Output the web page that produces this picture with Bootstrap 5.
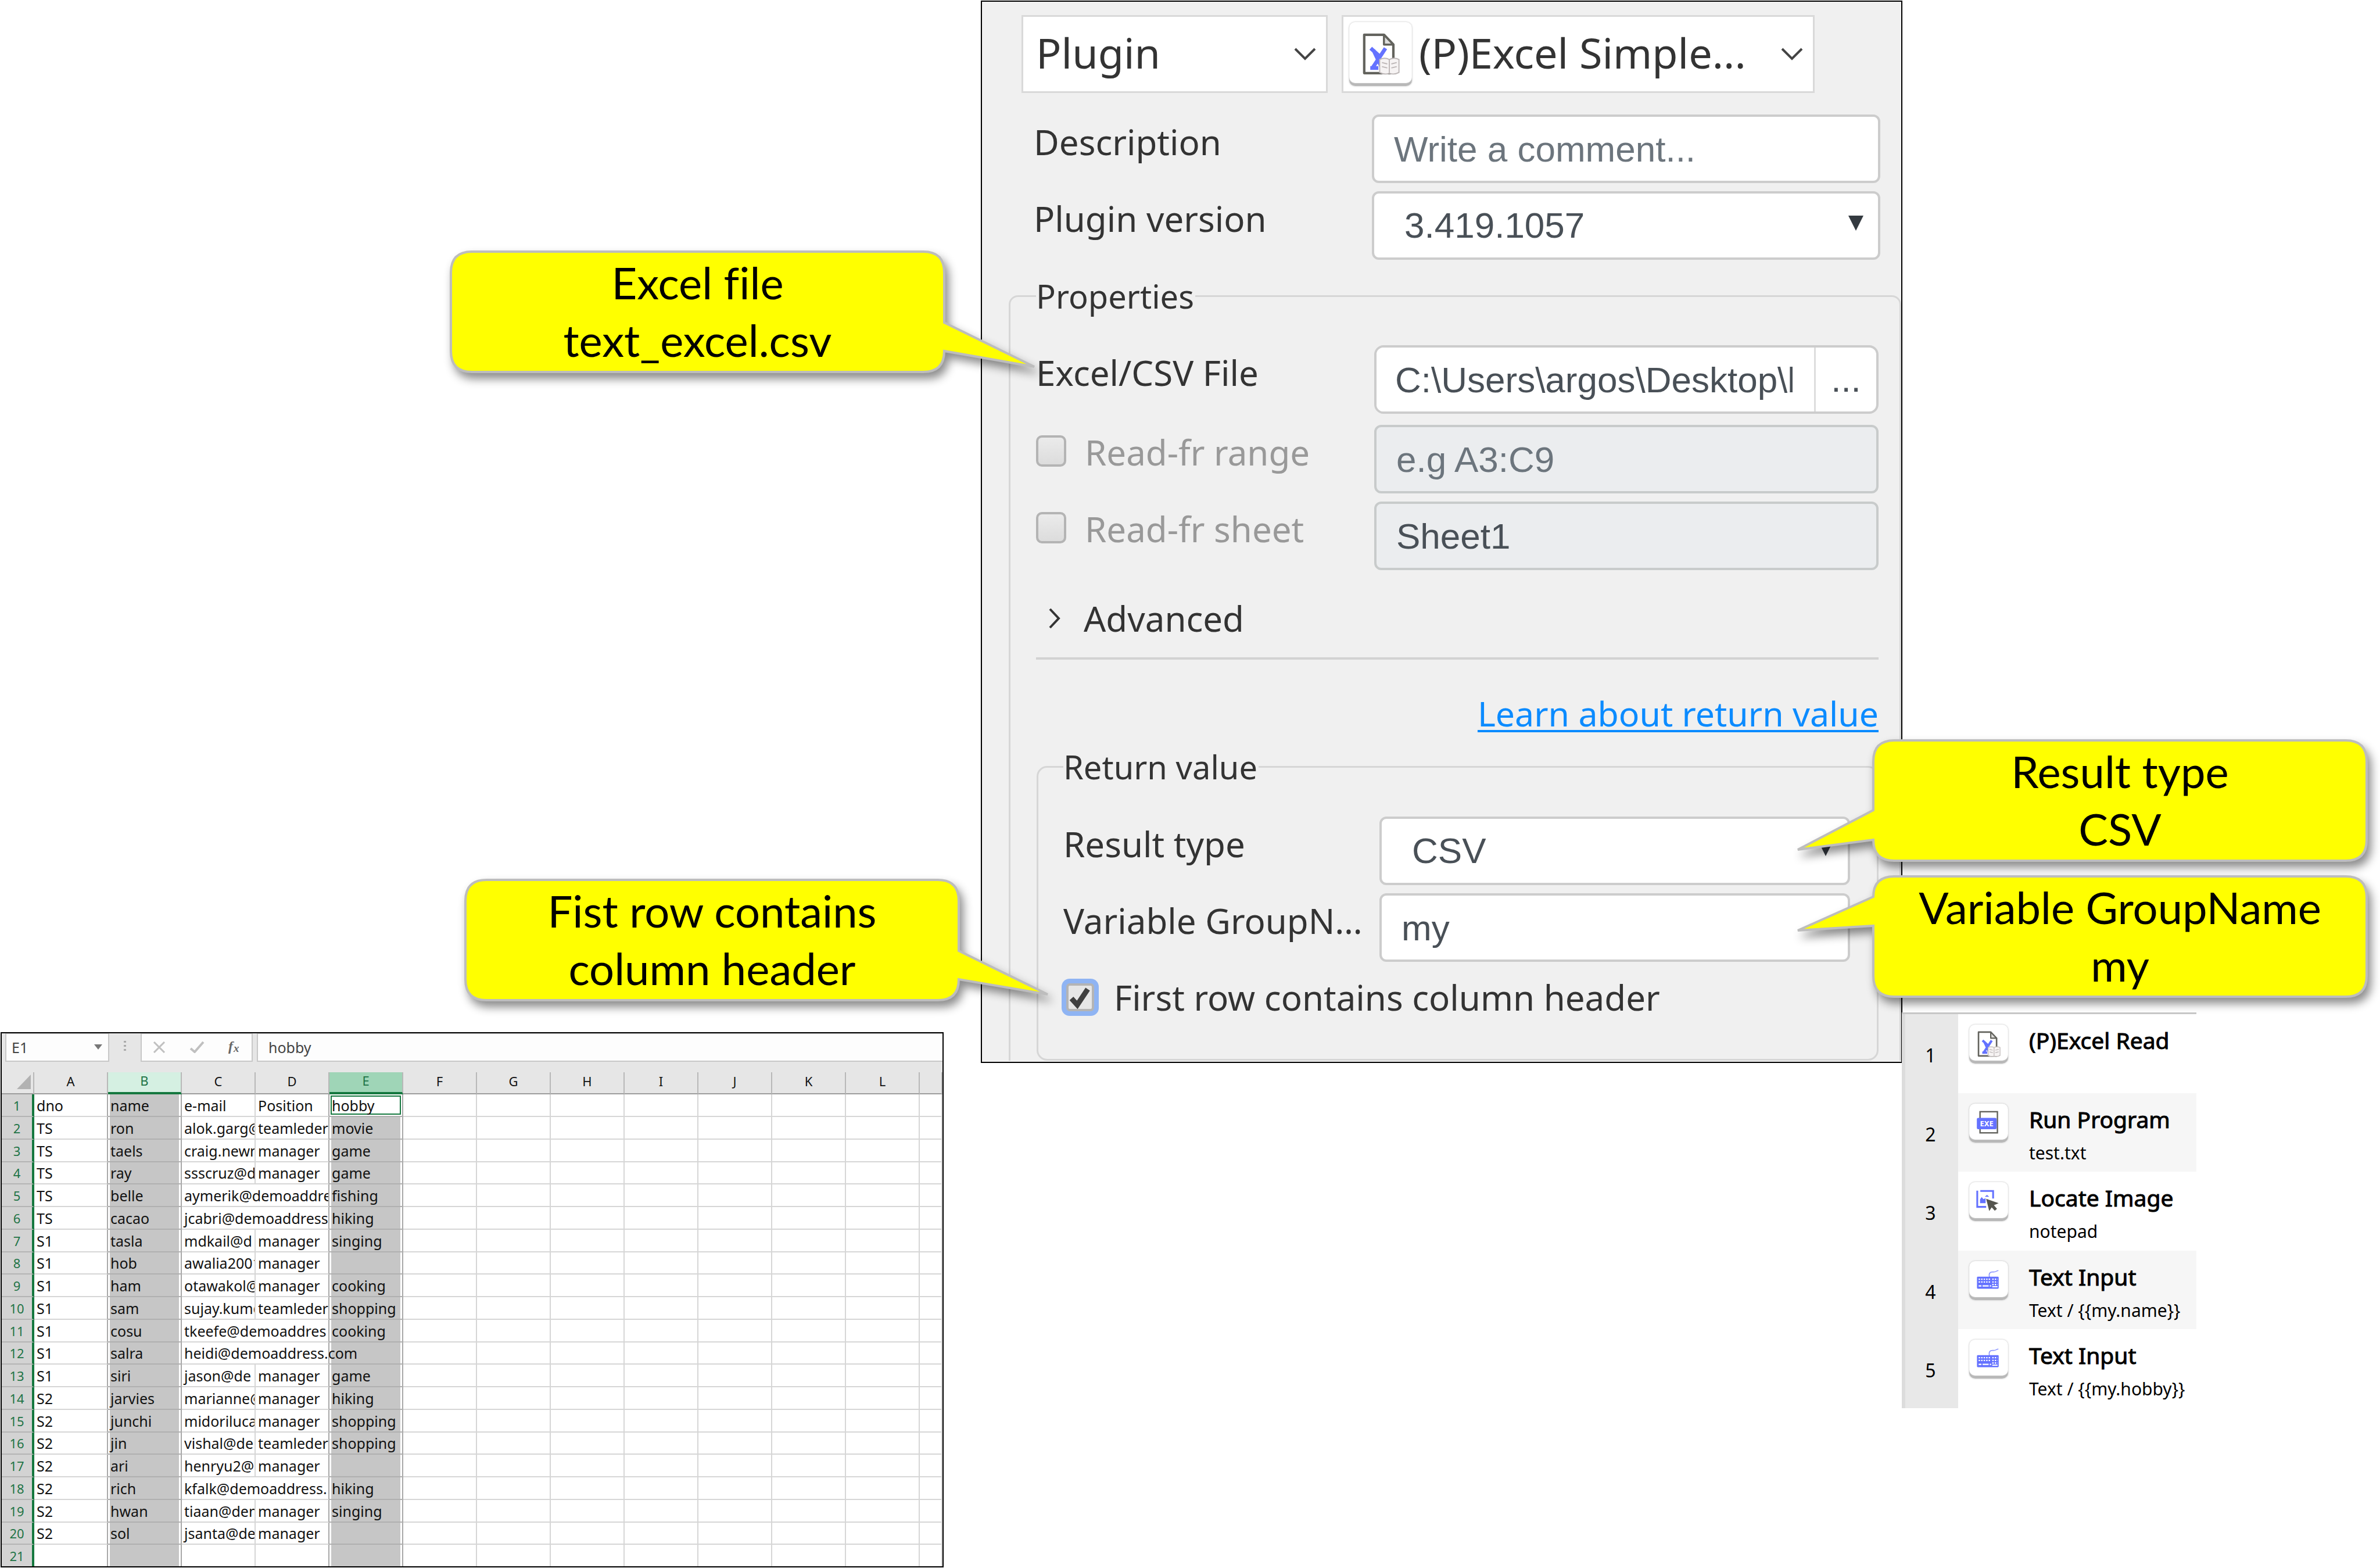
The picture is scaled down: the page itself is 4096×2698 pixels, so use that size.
<!DOCTYPE html>
<html lang="en">
<head>
<meta charset="utf-8">
<meta name="viewport" content="width=device-width, initial-scale=1">
<title>Excel Simple Read plugin</title>
<link href="https://cdn.jsdelivr.net/npm/bootstrap@5.3.0/dist/css/bootstrap.min.css" rel="stylesheet">
<style>
  body { background: #fff; color: #000; font-family: "Noto Sans", "Open Sans", sans-serif; }
  .board { display: grid; grid-template-columns: 1688fr 1586fr 822fr; min-height: 100vh; overflow: hidden; }

  /* plugin form */
  .plugin-panel { margin-top: 1px; border: 2px solid #000; background: #f0f0f0; padding: 23px 0 2px 46px; color: #333; font-size: 60px; line-height: 60px; }
  .top-pick { height: 134px; border: 3px solid #d9d9d9; border-radius: 0; background-color: #fff; color: #333; font-size: 72px; line-height: 96px; padding: 0 100px 6px 22px; appearance: none;
    background-repeat: no-repeat; background-position: right 16px center; background-size: 40px 24px;
    background-image: url("data:image/svg+xml,%3Csvg xmlns='http://www.w3.org/2000/svg' viewBox='0 0 40 24'%3E%3Cpath d='M3 3l17 17L37 3' fill='none' stroke='%23444' stroke-width='4'/%3E%3C/svg%3E"); }
  .pick-kind { width: 527px; margin-left: 22px; }
  .pick-action { width: 100%; padding-left: 130px; padding-right: 80px; }
  .pick-wrap { width: 814px; margin-left: 24px; }
  .pick-wrap .tile { position: absolute; left: 13px; top: 12px; width: 108px; height: 110px; }
  .field-name { width: 582px; flex: none; padding-bottom: 24px; padding-right: 16px; line-height: 84px; }
  .field-row { display: flex; align-items: center; height: 118px; margin-top: 14px; }
  .head-fields { padding: 23px 36px 0 43px; }
  .box-input { flex: 1; min-width: 0; width: 100%; height: 118px; border: 4px solid #ccc; border-radius: 12px; background-color: #fff; color: #495057; font-family: "Liberation Sans", Arial, sans-serif; font-size: 62px; line-height: 80px; padding: 0 34px; }
  .box-input::placeholder { color: #6c757d; opacity: 1; }
  .box-input:disabled { background-color: #ebedef; border-color: #c8cbcb; opacity: 1; }
  select.box-input { appearance: none; padding-left: 52px; background-repeat: no-repeat; background-position: right 25px top 38px; background-size: 26px 26px;
    background-image: url("data:image/svg+xml,%3Csvg xmlns='http://www.w3.org/2000/svg' viewBox='0 0 26 26'%3E%3Cpath d='M0 0h26L13 26z' fill='%23343a40'/%3E%3C/svg%3E"); }
  .path-group { flex: 1; min-width: 0; border: 4px solid #ccc; border-radius: 16px; background: #fff; height: 118px; }
  .path-group .box-input { border: 0; height: 110px; padding: 0 37px 0 32px; }
  .path-group button { width: 107px; flex: none; border: 0; border-left: 3px solid #ddd; border-radius: 0; background: none; color: #495057; font: 62px/80px "Liberation Sans", Arial, sans-serif; padding: 0; }
  .group-box { border: 3px solid #d6d6d6; border-radius: 16px; }
  .group-box > legend { float: none; width: auto; margin: 0; padding: 0 2px 0 0; font-size: 56px; line-height: 60px; color: #333; }
  .group-main { margin-top: 32px; border-bottom: 0; border-radius: 16px 16px 0 0; padding: 0 36px 0 44px; }
  .group-return { margin: 32px 0 0 1px; padding: 0 46px 76px 43px; border-radius: 18px; }
  .group-return .field-name { width: 544px; }
  .group-box > .first-field { margin-top: 55px; }
  .group-return > .first-field { margin-top: 56px; }
  .after-path { margin-top: 19px; }
  .tick { appearance: none; width: 52px; height: 54px; margin: 0 32px 4px 0; border: 4px solid #b4b4b4; border-radius: 10px; background: linear-gradient(#ebebeb, #dcdcdc); flex: none; }
  .tick-on { width: 48px; height: 48px; margin: 0 34px 0 5px; border-radius: 6px; background: url("data:image/svg+xml,%3Csvg xmlns='http://www.w3.org/2000/svg' viewBox='0 0 40 40'%3E%3Cpath d='M5 22l10 11L33 6' fill='none' stroke='%23404040' stroke-width='9'/%3E%3C/svg%3E") center / 40px 40px no-repeat #e6e6e6; box-shadow: 0 0 0 8px #8fb4f3; }
  .muted-name { color: #999; display: flex; align-items: center; }
  .more-btn { margin: 53px 0 0 21px; font-size: 60px; line-height: 60px; border: 0; color: #333; display: flex; align-items: center; gap: 39px; }
  .rule { height: 4px; margin: 37px 0 0; background: #d2d2d2; border: 0; opacity: 1; }
  .learn { margin-top: 62px; text-align: right; font-size: 59px; }
  .learn a { color: #0b8bff; text-decoration: underline; text-decoration-thickness: 4px; text-underline-offset: 6px; }
  .header-flag { margin-top: 31px; display: flex; align-items: center; }

  /* icon tiles */
  .tile { display: block; flex: none; background: #fff; border-radius: 10px; box-shadow: 0 0 3px #bbb, inset 0 -5px 1px #b8b8b8; }

  /* callouts over the form */
  .callout-note { position: absolute; width: 853px; height: 211px; z-index: 3; color: #000; font-family: Lato, "Noto Sans", sans-serif; font-size: 76px; line-height: 99px; text-align: center; font-variant-ligatures: none; }
  .callout-note svg { position: absolute; left: 0; top: 0; width: 853px; height: 211px; overflow: visible; filter: drop-shadow(6px 10px 8px rgba(0, 0, 0, .45)); }
  .callout-note p { position: relative; margin: 0; padding-top: 5px; white-space: nowrap; }
  .note-file { left: -914px; top: 431px; }
  .note-header { left: -889px; top: 1512px; }
  .note-type { left: 1534px; top: 1272px; }
  .note-group { left: 1534px; top: 1506px; }

  /* spreadsheet */
  .sheet { margin: 0 64px 1px 1px; border: 2px solid #000; background: #e6e6e6; font-size: 25px; line-height: 30px; align-self: end; min-width: 0; }
  .formula-bar { height: 67px; padding-left: 6px; display: flex; align-items: flex-start; }
  .bar-box { height: 49px; background-color: #fdfdfd; border: 2px solid #c8c8c8; border-top-width: 1px; border-radius: 0; color: #444; font-size: 25px; line-height: 30px; }
  .cell-name { width: 179px; padding: 0 12px 0 9px; appearance: none; background-repeat: no-repeat; background-position: right 10px top 18px; background-size: 14px 9px;
    background-image: url("data:image/svg+xml,%3Csvg xmlns='http://www.w3.org/2000/svg' viewBox='0 0 14 9'%3E%3Cpath d='M0 0h14L7 9z' fill='%23777'/%3E%3C/svg%3E"); }
  .bar-tools { width: 193px; display: flex; justify-content: space-between; align-items: center; padding: 0 18px; }
  .bar-tools button { border: 0; background: none; padding: 0; line-height: 0; }
  .formula { flex: 1; min-width: 0; margin-left: 7px; padding: 0 18px; border-right: 0; }
  .dots { width: 54px; text-align: center; }
  .grid-table { table-layout: fixed; width: 100%; border-collapse: separate; border-spacing: 0; color: #111; background: #fff; }
  .grid-table td { border-right: 2px solid #d6d6d6; border-bottom: 2px solid #d6d6d6; padding: 0 0 0 4px; height: 39px; white-space: nowrap; overflow: hidden; text-align: left; line-height: 30px; }
  .grid-table tbody tr:nth-child(4n) > * { height: 38px; }
  .grid-table tbody tr:last-child > * { height: 37px; border-bottom: 0; }
  .grid-table thead th { background: #e6e6e6; height: 38px; padding: 0 0 6px; font-size: 22px; line-height: 26px; font-weight: 400; text-align: center; border-right: 2px solid #b8b8b8; border-bottom: 2px solid #9c9c9c; }
  .grid-table tbody th { background: #d3d3d3; color: #217346; font-size: 22px; line-height: 26px; font-weight: 400; text-align: center; padding: 0; border-right: 4px solid #15783f; border-bottom: 2px solid #b4b4b4; }
  .grid-table thead .head-near { background: #d5f0e2; color: #217346; border-bottom: 4px solid #15783f; }
  .grid-table thead .head-active { background: #9fd5b7; color: #217346; border-bottom: 4px solid #15783f; }
  .grid-table .edge { border-right-color: #a8a8a8; }
  .grid-table .picked { background: #c6c6c6; border-bottom-color: #b0b0b0; border-right-color: #a8a8a8; box-shadow: inset 3px 0 #fff, inset -3px 0 #fff; }
  .grid-table .active-cell { background: #fff; box-shadow: inset 0 0 0 2px #fff, inset 0 0 0 4px #15783f; }
  .grid-table .spill { overflow: visible; position: relative; z-index: 1; }

  /* step list */
  .steps { align-self: end; margin: 0 0 275px -1px; width: 507px; border-top: 3px solid #c8c8c8; list-style: none; padding: 0; z-index: 1; }
  .steps li { display: flex; height: 136px; background: #fff; }
  .steps li:nth-child(even) { height: 135px; background: #f6f6f6; }
  .step-no { width: 97px; flex: none; border-left: 6px solid #dcdcdc; background: #e8e8e8; text-align: center; padding: 49px 4px 0 0; font-size: 32px; line-height: 44px; }
  .steps .tile { width: 67px; height: 67px; margin: 18px 0 0 19px; }
  .step-text { padding: 19px 0 0 36px; white-space: nowrap; }
  .step-title { font-size: 39px; line-height: 52px; -webkit-text-stroke: 1px #000; }
  .step-sub { font-size: 30px; line-height: 40px; margin-top: 12px; }
</style>
<script src="https://cdn.jsdelivr.net/npm/bootstrap@5.3.0/dist/js/bootstrap.bundle.min.js"></script>
</head>
<body>
<svg width="0" height="0" class="position-absolute" aria-hidden="true">
  <symbol id="ic-excel" viewBox="0 0 280 280">
    <path d="M67 54h88l42 44v127H67z" fill="#fff" stroke="#63635d" stroke-width="11" stroke-linejoin="round"/>
    <path d="M155 54v44h42z" fill="#ddd" stroke="#63635d" stroke-width="9" stroke-linejoin="round"/>
    <path d="M96 114l44 40M162 114L104 202M108 122l34 72M94 202h36" fill="none" stroke="#6472ff" stroke-width="17"/>
    <path d="M136 164q22-10 43 0q22-10 43 0v58q-21 12-43 4q-22 8-43-4z" fill="#f6f3f3" stroke="#bdb7b7" stroke-width="5"/>
    <path d="M179 166v58M146 178l24 6M146 196l24 6M188 184l24-6M188 202l24-6" stroke="#bdb7b7" stroke-width="5" fill="none"/>
  </symbol>
  <symbol id="ic-exe" viewBox="0 0 280 280">
    <rect x="78" y="58" width="125" height="152" fill="#fff" stroke="#63635d" stroke-width="10"/>
    <rect x="55" y="102" width="142" height="82" rx="10" fill="#6472ff"/>
    <text x="126" y="162" font-family="Noto Sans, sans-serif" font-weight="700" font-size="54" fill="#fff" text-anchor="middle">EXE</text>
  </symbol>
  <symbol id="ic-locate" viewBox="0 0 280 280">
    <path d="M80 64h92v54M58 62v116h64" fill="none" stroke="#6472ff" stroke-width="13"/>
    <path d="M78 152v-28l12-16 12 14 16-6v36zM112 106l16-14 16 14" fill="#6472ff"/>
    <path d="M122 120l90 32-34 14 22 26-16 14-22-24-18 26z" fill="#55554f"/>
  </symbol>
  <symbol id="ic-keys" viewBox="0 0 280 280">
    <path d="M146 116c-8-30 6-40 26-38s24-10 38-10" fill="none" stroke="#8d97ff" stroke-width="7"/>
    <rect x="56" y="112" width="156" height="86" rx="6" fill="#6472ff"/>
    <path d="M68 130h88M68 150h88M166 130h38M166 150h38M166 168h38" stroke="#fff" stroke-width="10" stroke-dasharray="10 8" fill="none"/>
    <path d="M68 178h20M96 178h44M148 178h10M166 184h38" stroke="#fff" stroke-width="9" fill="none"/>
  </symbol>
</svg>

<main class="board">
  <section class="sheet" aria-label="Worksheet">
    <div class="formula-bar">
      <select class="bar-box cell-name" aria-label="Cell name"><option>E1</option></select>
      <div class="dots"><svg width="4" height="18" viewBox="0 0 4 18" class="mt-2"><path d="M0 0h4v3H0zM0 7h4v3H0zM0 14h4v3H0z" fill="#aaa"/></svg></div>
      <div class="bar-box bar-tools">
        <button type="button" aria-label="Cancel"><svg width="24" height="20" viewBox="0 0 24 20"><path d="M3 1l18 18M21 1L3 19" stroke="#c0c0c0" stroke-width="3" fill="none"/></svg></button>
        <button type="button" aria-label="Enter"><svg width="26" height="20" viewBox="0 0 26 20"><path d="M2 12l7 6L24 1" stroke="#c0c0c0" stroke-width="4" fill="none"/></svg></button>
        <button type="button" aria-label="Insert function"><svg width="24" height="26" viewBox="0 0 24 26"><text x="2" y="19" font-family="Liberation Serif, serif" font-style="italic" font-weight="700" font-size="24" fill="#666">f</text><text x="11" y="21" font-family="Liberation Serif, serif" font-style="italic" font-weight="700" font-size="19" fill="#666">x</text></svg></button>
      </div>
      <input class="bar-box formula" type="text" value="hobby" aria-label="Formula">
    </div>
    <table class="grid-table">
      <colgroup id="cols"></colgroup>
      <thead><tr id="heads"></tr></thead>
      <tbody id="cells"></tbody>
    </table>
  </section>

  <section class="position-relative align-self-start">
    <form class="plugin-panel">
      <div class="d-flex">
        <select class="top-pick pick-kind" aria-label="Action kind"><option>Plugin</option></select>
        <div class="pick-wrap position-relative">
          <select class="top-pick pick-action" aria-label="Action"><option>(P)Excel Simple...</option></select>
          <svg class="tile"><use href="#ic-excel"/></svg>
        </div>
      </div>
      <div class="head-fields">
        <div class="field-row">
          <label class="field-name" for="desc">Description</label>
          <input class="box-input" id="desc" type="text" placeholder="Write a comment...">
        </div>
        <div class="field-row">
          <label class="field-name" for="ver">Plugin version</label>
          <select class="box-input" id="ver"><option>3.419.1057</option></select>
        </div>
      </div>
      <fieldset class="group-box group-main">
        <legend>Properties</legend>
        <div class="field-row first-field">
          <label class="field-name" for="file">Excel/CSV File</label>
          <div class="path-group d-flex">
            <input class="box-input" id="file" type="text" value="C:\Users\argos\Desktop\b">
            <button type="button" aria-label="Browse">...</button>
          </div>
        </div>
        <div class="field-row after-path">
          <label class="field-name muted-name" for="use-range"><input class="tick" id="use-range" type="checkbox">Read-fr range</label>
          <input class="box-input" type="text" placeholder="e.g A3:C9" aria-label="Range" disabled>
        </div>
        <div class="field-row">
          <label class="field-name muted-name" for="use-sheet"><input class="tick" id="use-sheet" type="checkbox">Read-fr sheet</label>
          <input class="box-input" type="text" value="Sheet1" aria-label="Sheet" disabled>
        </div>
        <button type="button" class="btn p-0 more-btn"><svg width="22" height="38" viewBox="0 0 22 38"><path d="M3 3l15 16L3 35" fill="none" stroke="#333" stroke-width="4"/></svg>Advanced</button>
        <hr class="rule">
        <div class="learn"><a href="#">Learn about return value</a></div>
        <fieldset class="group-box group-return">
          <legend>Return value</legend>
          <div class="field-row first-field">
            <label class="field-name" for="rtype">Result type</label>
            <select class="box-input" id="rtype"><option>CSV</option></select>
          </div>
          <div class="field-row">
            <label class="field-name text-truncate" for="group">Variable GroupName</label>
            <input class="box-input" id="group" type="text" value="my">
          </div>
          <label class="header-flag" for="has-head"><input class="tick tick-on" id="has-head" type="checkbox" checked>First row contains column header</label>
        </fieldset>
      </fieldset>
    </form>

    <div class="callout-note note-file">
      <svg viewBox="0 0 853 211"><path d="M38 2H815Q851 2 851 38V124L1006 200 851 173Q851 209 815 209H38Q2 209 2 173V38Q2 2 38 2z" fill="#ff0" stroke="#bdbdbd" stroke-width="4"/></svg>
      <p>Excel file<br>text_excel.csv</p>
    </div>
    <div class="callout-note note-header">
      <svg viewBox="0 0 853 211"><path d="M38 2H815Q851 2 851 38V124L1004 199 851 173Q851 209 815 209H38Q2 209 2 173V38Q2 2 38 2z" fill="#ff0" stroke="#bdbdbd" stroke-width="4"/></svg>
      <p>Fist row contains<br>column header</p>
    </div>
    <div class="callout-note note-type">
      <svg viewBox="0 0 853 211"><path d="M38 2H815Q851 2 851 38V173Q851 209 815 209H38Q2 209 2 173L-128 190 2 122V38Q2 2 38 2z" fill="#ff0" stroke="#bdbdbd" stroke-width="4"/></svg>
      <p>Result type<br>CSV</p>
    </div>
    <div class="callout-note note-group">
      <svg viewBox="0 0 853 211"><path d="M38 2H815Q851 2 851 38V173Q851 209 815 209H38Q2 209 2 173V87L-128 95 2 37Q2 2 38 2z" fill="#ff0" stroke="#bdbdbd" stroke-width="4"/></svg>
      <p>Variable GroupName<br>my</p>
    </div>
  </section>

  <ol class="steps">
    <li><div class="step-no">1</div><svg class="tile"><use href="#ic-excel"/></svg><div class="step-text"><div class="step-title">(P)Excel Read</div></div></li>
    <li><div class="step-no">2</div><svg class="tile"><use href="#ic-exe"/></svg><div class="step-text"><div class="step-title">Run Program</div><div class="step-sub">test.txt</div></div></li>
    <li><div class="step-no">3</div><svg class="tile"><use href="#ic-locate"/></svg><div class="step-text"><div class="step-title">Locate Image</div><div class="step-sub">notepad</div></div></li>
    <li><div class="step-no">4</div><svg class="tile"><use href="#ic-keys"/></svg><div class="step-text"><div class="step-title">Text Input</div><div class="step-sub">Text / {{my.name}}</div></div></li>
    <li><div class="step-no">5</div><svg class="tile"><use href="#ic-keys"/></svg><div class="step-text"><div class="step-title">Text Input</div><div class="step-sub">Text / {{my.hobby}}</div></div></li>
  </ol>
</main>

<script>
  // dno, name, e-mail, position ("" lets the address run on), hobby
  const people = [
    ["dno", "name", "e-mail", "Position", "hobby"],
    ["TS", "ron", "alok.garg@", "teamleder", "movie"],
    ["TS", "taels", "craig.newm", "manager", "game"],
    ["TS", "ray", "ssscruz@d", "manager", "game"],
    ["TS", "belle", "aymerik@demoaddre", "", "fishing"],
    ["TS", "cacao", "jcabri@demoaddress", "", "hiking"],
    ["S1", "tasla", "mdkail@d", "manager", "singing"],
    ["S1", "hob", "awalia2001", "manager", ""],
    ["S1", "ham", "otawakol@", "manager", "cooking"],
    ["S1", "sam", "sujay.kum@", "teamleder", "shopping"],
    ["S1", "cosu", "tkeefe@demoaddres", "", "cooking"],
    ["S1", "salra", "heidi@demoaddress.com", "", ""],
    ["S1", "siri", "jason@de", "manager", "game"],
    ["S2", "jarvies", "marianne@", "manager", "hiking"],
    ["S2", "junchi", "midoriluca", "manager", "shopping"],
    ["S2", "jin", "vishal@de", "teamleder", "shopping"],
    ["S2", "ari", "henryu2@", "manager", ""],
    ["S2", "rich", "kfalk@demoaddress.", "", "hiking"],
    ["S2", "hwan", "tiaan@dem", "manager", "singing"],
    ["S2", "sol", "jsanta@de", "manager", ""],
    ["", "", "", "", ""]
  ];
  const letters = "ABCDEFGHIJKL".split("");
  document.getElementById("cols").innerHTML =
    '<col style="width:56px">' + letters.map(() => '<col style="width:127px">').join("") + "<col>";
  document.getElementById("heads").innerHTML =
    '<th class="text-end"><svg width="24" height="25" viewBox="0 0 24 25" class="me-1"><path d="M24 0v25H0z" fill="#b2b2b2"/></svg></th>' +
    letters.map(l => `<th class="${l === "B" ? "head-near" : l === "E" ? "head-active" : ""}">${l}</th>`).join("") + "<th></th>";
  document.getElementById("cells").innerHTML = people.map((p, i) => {
    const runsOn = p[2] && !p[3];
    const mail = runsOn
      ? `<td colspan="2" class="edge ${p[4] ? "" : "spill"}">${p[2]}</td>`
      : `<td>${p[2]}</td><td class="edge">${p[3]}</td>`;
    return `<tr><th scope="row">${i + 1}</th><td class="edge">${p[0]}</td><td class="picked">${p[1]}</td>${mail}` +
      `<td class="picked ${i ? "" : "active-cell"}">${p[4]}</td>` + "<td></td>".repeat(8) + "</tr>";
  }).join("");
</script>
</body>
</html>
